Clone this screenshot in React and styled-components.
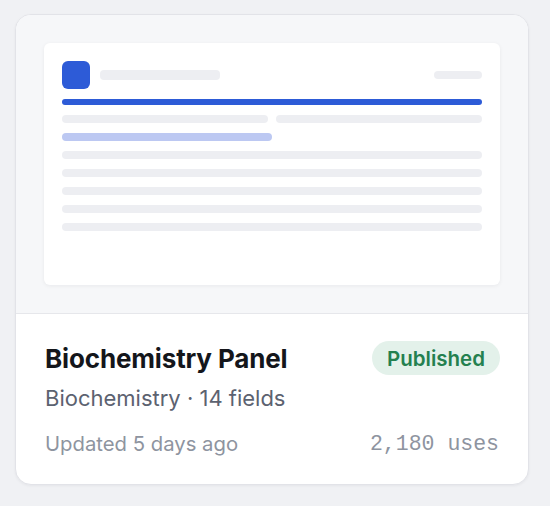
import React from 'react'
import styled, { createGlobalStyle } from 'styled-components'

const Global = createGlobalStyle`
  html, body {
    margin: 0;
    padding: 0;
    background: #f0f1f4;
  }
  body {
    font-family: Inter, "Noto Sans", sans-serif;
  }
`

const Page = styled.div`
  width: 550px;
  height: 506px;
  padding: 14px 21px 0 15px;
  box-sizing: border-box;
`

const Card = styled.div`
  width: 514px;
  height: 471px;
  box-sizing: border-box;
  background: #fff;
  border: 1px solid #e2e3e8;
  border-radius: 16px;
  overflow: hidden;
  box-shadow: 0 1px 3px rgba(20, 24, 40, 0.05);
  display: flex;
  flex-direction: column;
`

const Preview = styled.div`
  background: #f6f7f9;
  padding: 28px;
  border-bottom: 1px solid #e6e7eb;
`

const Sheet = styled.div`
  height: 242px;
  box-sizing: border-box;
  background: #fff;
  border-radius: 6px;
  padding: 18px;
  box-shadow: 0 1px 4px rgba(20, 24, 40, 0.06);
  display: flex;
  flex-direction: column;
  gap: 10px;
`

const SheetHead = styled.div`
  display: flex;
  align-items: center;
  gap: 10px;
`

const Logo = styled.div`
  width: 28px;
  height: 28px;
  border-radius: 6px;
  background: #2d5bd7;
`

const Bar = styled.div`
  height: ${p => p.h || 8}px;
  width: ${p => p.w || '100%'};
  flex: ${p => p.grow ? 1 : 'none'};
  border-radius: 4px;
  background: ${p => p.tone === 'blue' ? '#2d5bd7' : p.tone === 'soft' ? '#bcc8f2' : '#edeef2'};
`

const Spacer = styled.div`
  flex: 1;
`

const Pair = styled.div`
  display: flex;
  gap: 8px;
`

const Body = styled.div`
  flex: 1;
  padding: 27px 28px 0 29px;
  display: flex;
  flex-direction: column;
`

const TitleRow = styled.div`
  display: flex;
  align-items: center;
  justify-content: space-between;
  height: 34px;
`

const Title = styled.h3`
  margin: 0;
  font-size: 26px;
  font-weight: 700;
  color: #14161b;
  letter-spacing: -0.15px;
`

const Badge = styled.span`
  height: 34px;
  padding: 0 15px;
  display: inline-flex;
  align-items: center;
  border-radius: 17px;
  background: #e3f1ea;
  color: #24804f;
  font-size: 20.5px;
  font-weight: 600;
`

const Meta = styled.div`
  margin-top: 10px;
  font-size: 22px;
  line-height: 26px;
  color: #5c6270;
`

const Footer = styled.div`
  margin-top: 20px;
  display: flex;
  justify-content: space-between;
  align-items: center;
  line-height: 26px;
  font-size: 20.3px;
  color: #8e94a0;
`

const Uses = styled.span`
  font-family: "Liberation Mono", monospace;
  font-size: 21.5px;
  padding-right: 1px;
`

export default function App() {
  return (
    <>
      <Global />
      <Page>
        <Card>
          <Preview>
            <Sheet>
              <SheetHead>
                <Logo />
                <Bar h={10} w="120px" />
                <Spacer />
                <Bar w="48px" />
              </SheetHead>
              <Bar h={6} tone="blue" />
              <Pair>
                <Bar grow />
                <Bar grow />
              </Pair>
              <Bar tone="soft" w="50%" />
              <Bar />
              <Bar />
              <Bar />
              <Bar />
              <Bar />
            </Sheet>
          </Preview>
          <Body>
            <TitleRow>
              <Title>Biochemistry Panel</Title>
              <Badge>Published</Badge>
            </TitleRow>
            <Meta>Biochemistry · 14 fields</Meta>
            <Footer>
              <span>Updated 5 days ago</span>
              <Uses>2,180 uses</Uses>
            </Footer>
          </Body>
        </Card>
      </Page>
    </>
  )
}
